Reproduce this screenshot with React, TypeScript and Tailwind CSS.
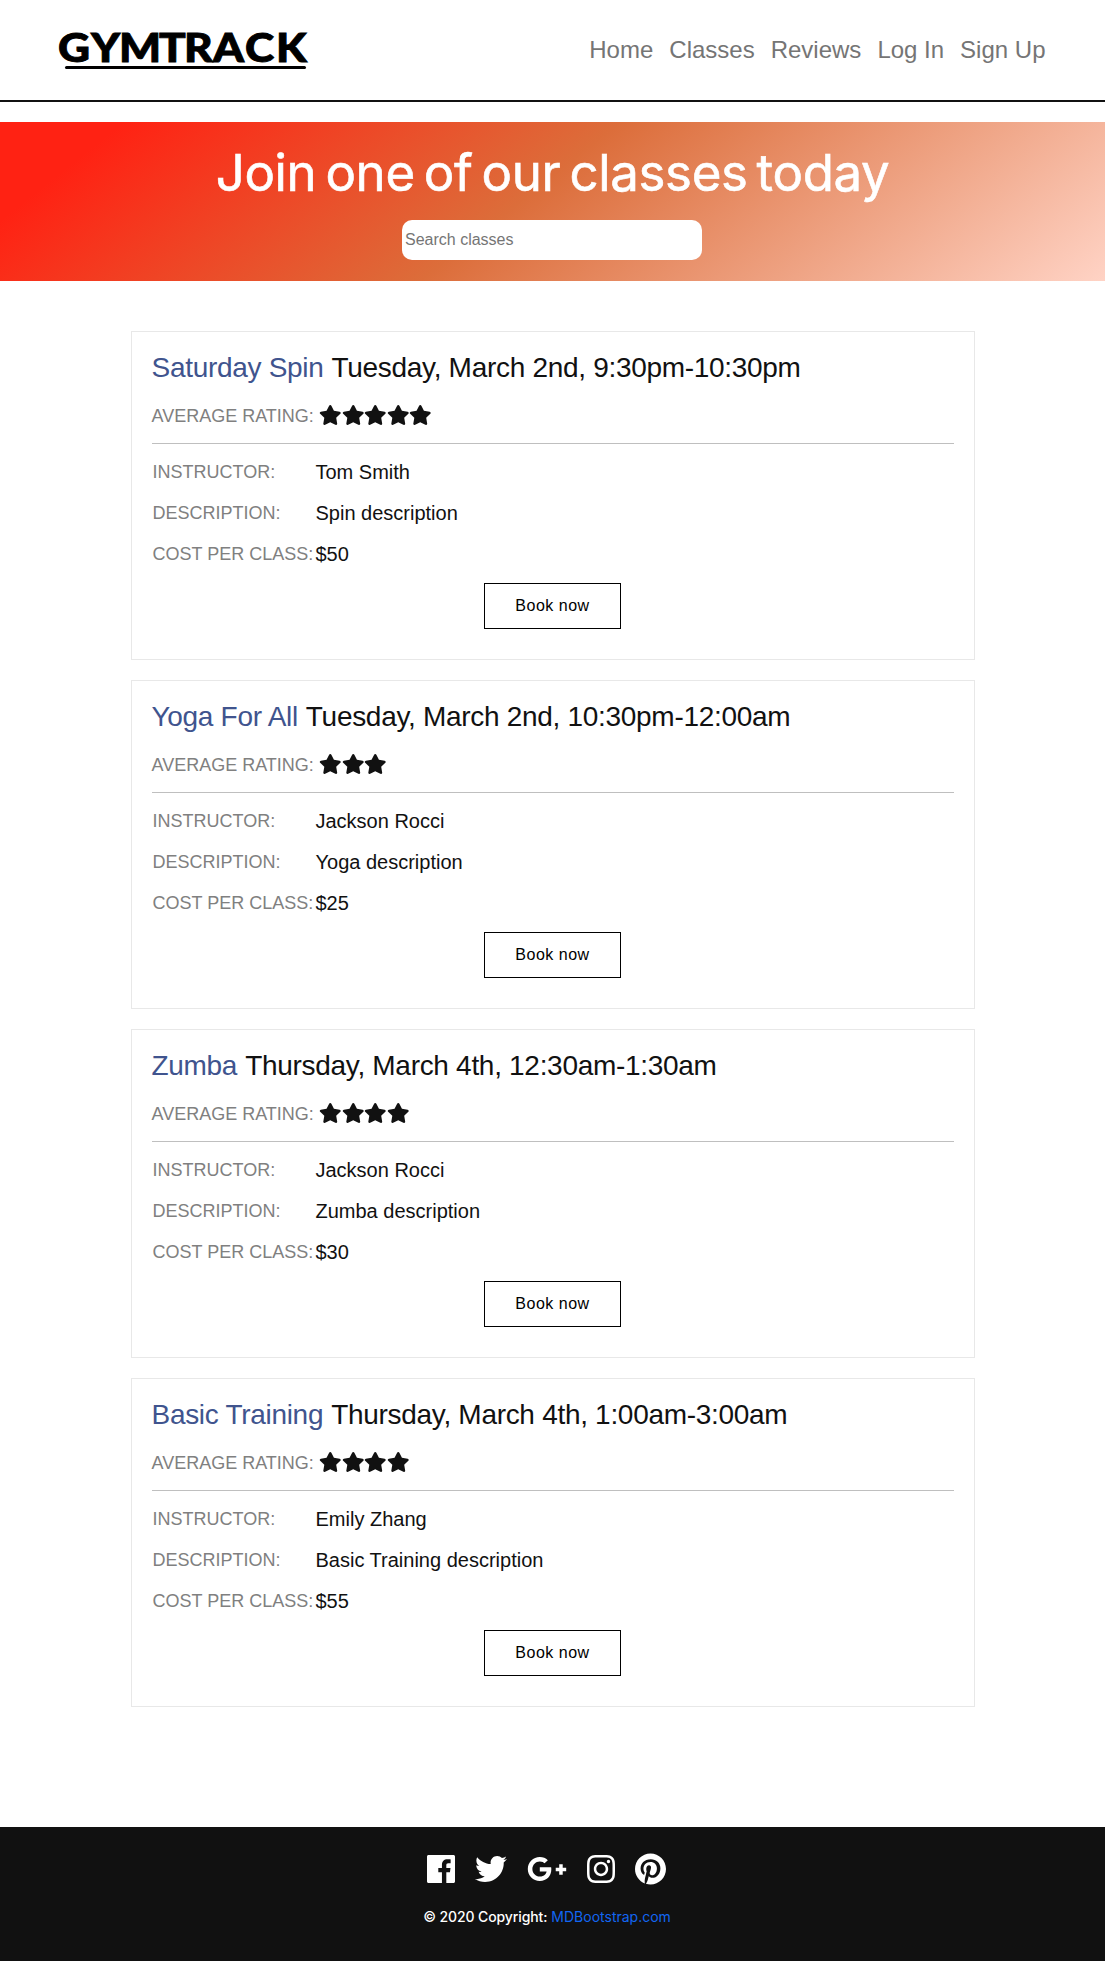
import { FaGooglePlusG, FaInstagram, FaPinterest, FaStar, FaTwitter } from "react-icons/fa";

type GymClass = {
  name: string;
  time: string;
  stars: number;
  instructor: string;
  description: string;
  cost: string;
};

const classes: GymClass[] = [
  { name: "Saturday Spin", time: "Tuesday, March 2nd, 9:30pm-10:30pm", stars: 5, instructor: "Tom Smith", description: "Spin description", cost: "$50" },
  { name: "Yoga For All", time: "Tuesday, March 2nd, 10:30pm-12:00am", stars: 3, instructor: "Jackson Rocci", description: "Yoga description", cost: "$25" },
  { name: "Zumba", time: "Thursday, March 4th, 12:30am-1:30am", stars: 4, instructor: "Jackson Rocci", description: "Zumba description", cost: "$30" },
  { name: "Basic Training", time: "Thursday, March 4th, 1:00am-3:00am", stars: 4, instructor: "Emily Zhang", description: "Basic Training description", cost: "$55" },
];

const links = ["Home", "Classes", "Reviews", "Log In", "Sign Up"];

function Logo() {
  return (
    <svg width="260" height="60" viewBox="0 -5 260 60" className="ml-[54px] overflow-visible">
      <text transform="scale(1.12 1)" x="3.6 33 58 93.8 116 142 170.5 198.2" y="37.3" fontFamily="Lato" fontWeight="900" fontSize="39.5" stroke="#000" strokeWidth="0.9">
        GYMTRACK
      </text>
      <rect x="11" y="41" width="241" height="3" rx="1.5" />
    </svg>
  );
}

function FacebookIcon() {
  return (
    <svg width="28" height="32" viewBox="0 0 448 512" fill="currentColor">
      <path d="M448 56.7v398.5c0 13.7-11.1 24.7-24.7 24.7H309.1V306.5h58.2l8.7-67.6h-67v-43.2c0-19.6 5.4-32.9 33.5-32.9h35.8v-60.5c-6.2-.8-27.4-2.7-52.2-2.7-51.6 0-87 31.5-87 89.4v49.9h-58.4v67.6h58.4V480H24.7C11.1 480 0 468.9 0 455.3V56.7C0 43.1 11.1 32 24.7 32h398.5c13.7 0 24.8 11.1 24.8 24.7z" />
    </svg>
  );
}

function Row({ label, value }: { label: string; value: string }) {
  return (
    <div className="flex h-[41px] items-center pl-px">
      <span className="w-[163px] whitespace-nowrap text-[18px] text-[#808080]">{label}</span>
      <span className="pb-0.5 text-[20px] text-[#111]">{value}</span>
    </div>
  );
}

function ClassCard({ item }: { item: GymClass }) {
  return (
    <article className="flex h-[329px] w-[844px] flex-col border border-[#e8e8e8] px-5 pt-4">
      <h2 className="h-10 text-[28px] leading-10 tracking-[-0.3px] text-[#111]">
        <span className="mr-px text-[#40548e]">{item.name}</span> {item.time}
      </h2>
      <div className="mt-2 flex h-10 items-center">
        <span className="mr-[5.6px] text-[18px] text-[#808080]">AVERAGE RATING:</span>
        <div className="flex pb-0.5">
          {Array.from({ length: item.stars }, (_, i) => (
            <FaStar key={i} className="h-5 w-[22.5px] text-[#111]" />
          ))}
        </div>
      </div>
      <div className="mt-[7px] mb-2 h-px shrink-0 bg-[#bfbfbf]" />
      <Row label="INSTRUCTOR:" value={item.instructor} />
      <Row label="DESCRIPTION:" value={item.description} />
      <Row label="COST PER CLASS:" value={item.cost} />
      <button className="mt-2 h-[46px] w-[137px] self-center border border-black text-[16px] tracking-[0.5px] text-black">
        Book now
      </button>
    </article>
  );
}

export default function App() {
  return (
    <div className="flex h-[1961px] w-full flex-col bg-white font-['Liberation_Sans',Arial,sans-serif]">
      <header className="flex h-[102px] items-center justify-between border-b-2 border-[#111]">
        <Logo />
        <nav className="mr-[59.5px] flex gap-4 text-[24px] text-[#757575]">
          {links.map((l) => (
            <a key={l}>{l}</a>
          ))}
        </nav>
      </header>
      <section className="mt-5 flex h-[159px] flex-col items-center bg-[linear-gradient(141.5deg,#ff2213_9.5%,#dc6d3a_47.5%,#ffd3c5_100%)]">
        <h1 className="mt-3 flex h-[78px] items-center whitespace-nowrap font-['Inter',sans-serif] text-[51px] tracking-[-0.35px] text-white [word-spacing:-5px] [-webkit-text-stroke:0.6px_white]">
          Join one of our classes today
        </h1>
        <input placeholder="Search classes" className="mt-2 mr-px h-10 w-[300px] rounded-[10px] bg-white pl-[3px] text-[16px] placeholder:text-[#757575]" />
      </section>
      <main className="mt-[50px] flex flex-col items-center gap-5">
        {classes.map((c) => (
          <ClassCard key={c.name} item={c} />
        ))}
      </main>
      <footer className="mt-auto flex h-[134px] flex-col items-center bg-[#111] pt-[26px] font-['Inter',sans-serif]">
        <div className="mr-[12px] flex gap-5 text-white">
          <FacebookIcon />
          <FaTwitter className="h-8 w-8" />
          <FaGooglePlusG className="h-8 w-10" />
          <FaInstagram className="h-8 w-7" />
          <FaPinterest className="h-8 w-[31px]" />
        </div>
        <p className="mt-[21px] mr-[11px] text-[14px] leading-[21px] text-white">
          <span className="font-medium tracking-[-0.1px]">© 2020 Copyright:</span> <a className="text-[#1266f1]">MDBootstrap.com</a>
        </p>
      </footer>
    </div>
  );
}
